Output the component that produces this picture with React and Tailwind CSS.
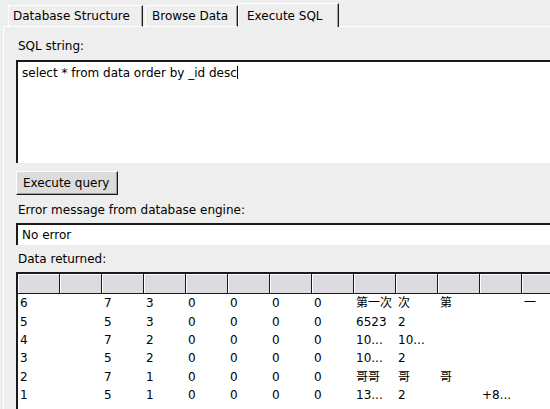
import React from "react";

const rows = [
  ["6", "", "7", "3", "0", "0", "0", "0", "第一次", "次", "第", "", "一"],
  ["5", "", "5", "3", "0", "0", "0", "0", "6523", "2", "", "", ""],
  ["4", "", "7", "2", "0", "0", "0", "0", "10...", "10...", "", "", ""],
  ["3", "", "5", "2", "0", "0", "0", "0", "10...", "2", "", "", ""],
  ["2", "", "7", "1", "0", "0", "0", "0", "哥哥", "哥", "哥", "", ""],
  ["1", "", "5", "1", "0", "0", "0", "0", "13...", "2", "", "+8...", ""],
];

const cols = Array.from({ length: 13 }, (_, i) => i);

export default function App() {
  return (
    <div
      className="w-[550px] h-[409px] overflow-hidden bg-[#eeeeee] text-[12px] leading-[14px] text-black"
      style={{ fontFamily: '"DejaVu Sans", "Noto Sans CJK SC", sans-serif' }}
    >
      {/* Tab bar */}
      <div className="flex items-end h-[27px] pl-[3px]">
        <div className="w-[5px] border-b border-white" />
        <div className="w-[135px] h-[22px] flex items-start pt-[3px] pl-[4px] border-t border-l border-b border-white border-r border-r-[#1e1e1e] shadow-[inset_-1px_0_0_#a0a0a0] whitespace-nowrap">
          Database Structure
        </div>
        <div className="w-[2px] border-b border-white" />
        <div className="w-[93px] h-[22px] flex items-start pt-[3px] pl-[6px] border-t border-l border-b border-white border-r border-r-[#1e1e1e] shadow-[inset_-1px_0_0_#a0a0a0] whitespace-nowrap">
          Browse Data
        </div>
        <div className="w-[101px] h-[24px] flex items-start pt-[5px] pl-[8px] border-t border-l border-white border-r border-r-[#1e1e1e] shadow-[inset_-1px_0_0_#a0a0a0] whitespace-nowrap">
          Execute SQL
        </div>
        <div className="flex-1 border-b border-white" />
      </div>

      {/* Panel */}
      <div className="ml-[3px] h-[382px] border-l border-white pl-[12px] flex flex-col">
        <div className="mt-[12px] pl-[2px]">SQL string:</div>
        <div className="mt-[7px] h-[103px] bg-white border-t-2 border-l-2 border-[#1a1a1a] pl-[4px] pt-[4px] whitespace-nowrap">
          select * from data order by _id desc
          <span className="inline-block w-px h-[13px] bg-black align-[-2px]" />
        </div>
        <div className="mt-[8px] w-[102px] h-[24px] bg-[#dcdcdc] border-t border-l border-white border-b border-r border-b-[#1a1a1a] border-r-[#1a1a1a] shadow-[inset_-1px_-1px_0_#9a9a9a] flex items-center pl-[6px] whitespace-nowrap">
          Execute query
        </div>
        <div className="mt-[8px] pl-[2px]">Error message from database engine:</div>
        <div className="mt-[6px] h-[22px] bg-white border-t-2 border-l-2 border-[#1a1a1a] pl-[4px] pt-[3px] whitespace-nowrap">
          No error
        </div>
        <div className="mt-[7px] pl-[2px]">Data returned:</div>
        <div className="mt-[6px] flex-1 bg-white border-t-2 border-l-2 border-[#1a1a1a] overflow-hidden">
          <div className="flex h-[20px]">
            {cols.map((c) => (
              <div
                key={c}
                className="w-[42px] shrink-0 bg-[#dcdce0] border-r border-b border-[#1a1a1a] shadow-[inset_1px_1px_0_#ffffff]"
              />
            ))}
          </div>
          {rows.map((r, i) => (
            <div key={i} className="flex h-[18.4px] items-center whitespace-nowrap">
              {r.map((v, j) => (
                <div key={j} className="w-[42px] shrink-0 pl-[2px] overflow-hidden">
                  {v}
                </div>
              ))}
            </div>
          ))}
        </div>
      </div>
    </div>
  );
}
